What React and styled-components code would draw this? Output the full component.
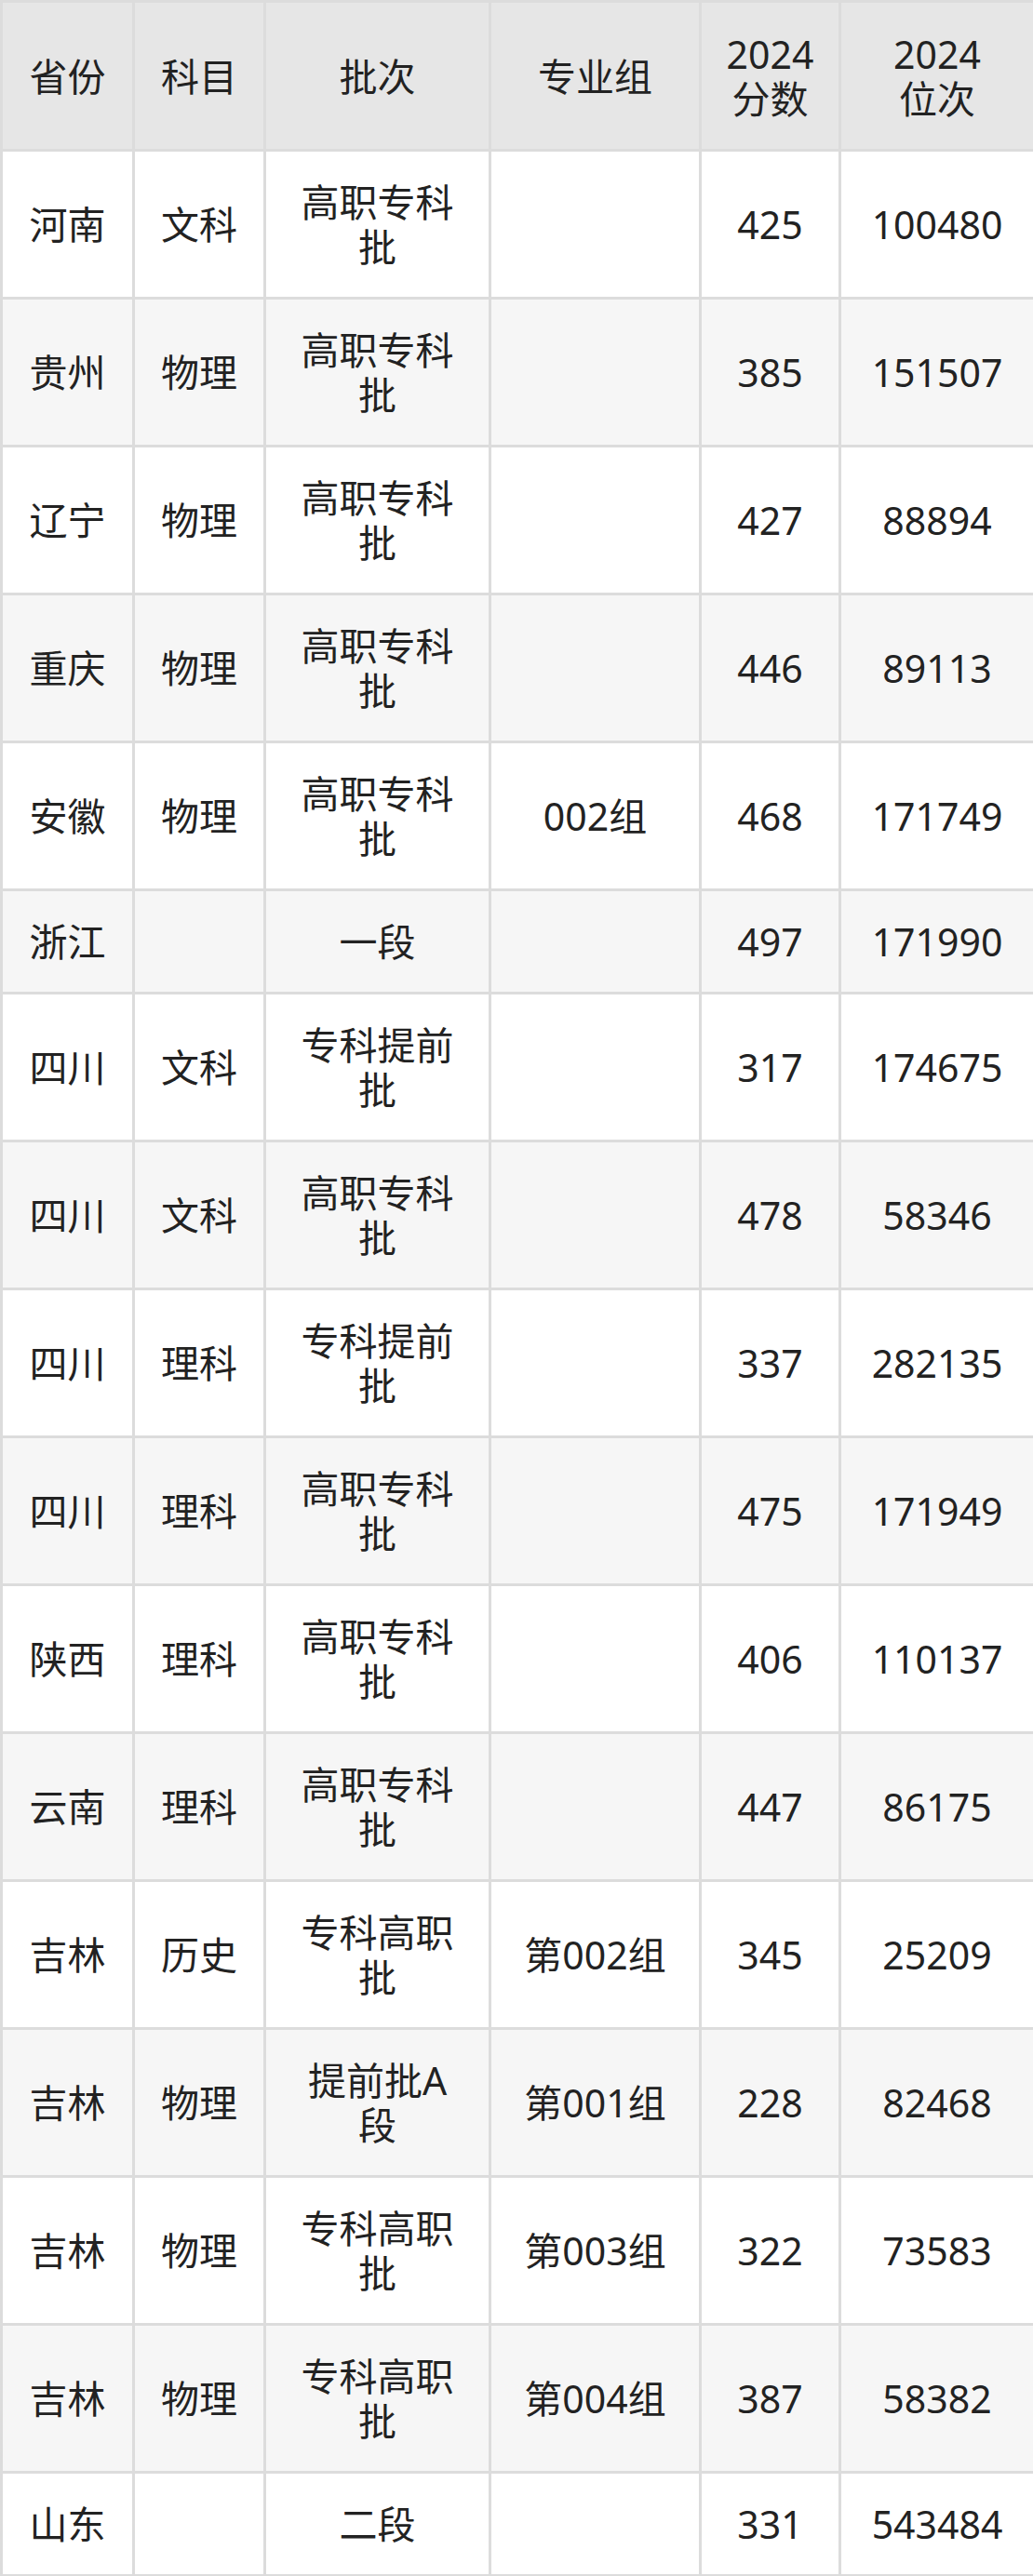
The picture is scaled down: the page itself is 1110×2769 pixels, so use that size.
import React from 'react';
import styled, { createGlobalStyle } from 'styled-components';

const GlobalStyle = createGlobalStyle`
  html, body {
    margin: 0;
    padding: 0;
    background: #ffffff;
  }
`;

const Table = styled.table`
  width: 1110px;
  table-layout: fixed;
  border-collapse: collapse;
  font-family: 'Noto Sans', 'Noto Sans CJK SC', sans-serif;
  font-size: 41px;
  line-height: 48px;
  color: #222222;
`;

const Row = styled.tr`
  background: ${({ $shaded }) => ($shaded ? '#f6f6f6' : '#ffffff')};
`;

// header labels wrap on their own ("2024" / "分数"), padding decides where
const HeadCell = styled.th`
  height: 157px;
  padding: 0 ${({ $pad }) => $pad}px;
  border: 3px solid #dcdcdc;
  background: #e6e6e6;
  font-weight: 400;
  text-align: center;
  vertical-align: middle;
`;

const Cell = styled.td`
  height: ${({ $short }) => ($short ? '108px' : '156px')};
  padding: ${({ $wide }) => ($wide ? '0 32px' : '0 8px')};
  border: 3px solid #dcdcdc;
  text-align: center;
  vertical-align: middle;
`;

const columns = [
  { label: '省份', width: 142, pad: 8 },
  { label: '科目', width: 141, pad: 8 },
  { label: '批次', width: 242, pad: 8 },
  { label: '专业组', width: 226, pad: 8 },
  { label: '2024分数', width: 150, pad: 8 },
  { label: '2024位次', width: 209, pad: 44 },
];

const rows = [
  ['河南', '文科', '高职专科批', '', '425', '100480'],
  ['贵州', '物理', '高职专科批', '', '385', '151507'],
  ['辽宁', '物理', '高职专科批', '', '427', '88894'],
  ['重庆', '物理', '高职专科批', '', '446', '89113'],
  ['安徽', '物理', '高职专科批', '002组', '468', '171749'],
  ['浙江', '', '一段', '', '497', '171990'],
  ['四川', '文科', '专科提前批', '', '317', '174675'],
  ['四川', '文科', '高职专科批', '', '478', '58346'],
  ['四川', '理科', '专科提前批', '', '337', '282135'],
  ['四川', '理科', '高职专科批', '', '475', '171949'],
  ['陕西', '理科', '高职专科批', '', '406', '110137'],
  ['云南', '理科', '高职专科批', '', '447', '86175'],
  ['吉林', '历史', '专科高职批', '第002组', '345', '25209'],
  ['吉林', '物理', '提前批A段', '第001组', '228', '82468'],
  ['吉林', '物理', '专科高职批', '第003组', '322', '73583'],
  ['吉林', '物理', '专科高职批', '第004组', '387', '58382'],
  ['山东', '', '二段', '', '331', '543484'],
];

const App = () => (
  <>
    <GlobalStyle />
    <Table>
      <colgroup>
        {columns.map((col, i) => (
          <col key={i} style={{ width: col.width }} />
        ))}
      </colgroup>
      <thead>
        <tr>
          {columns.map((col, i) => (
            <HeadCell key={i} $pad={col.pad}>
              {col.label}
            </HeadCell>
          ))}
        </tr>
      </thead>
      <tbody>
        {rows.map((row, r) => {
          const short = row[2].length <= 4;
          return (
            <Row key={r} $shaded={r % 2 === 1}>
              {row.map((value, c) => (
                <Cell key={c} $short={short} $wide={c === 2}>
                  {value}
                </Cell>
              ))}
            </Row>
          );
        })}
      </tbody>
    </Table>
  </>
);

export default App;
